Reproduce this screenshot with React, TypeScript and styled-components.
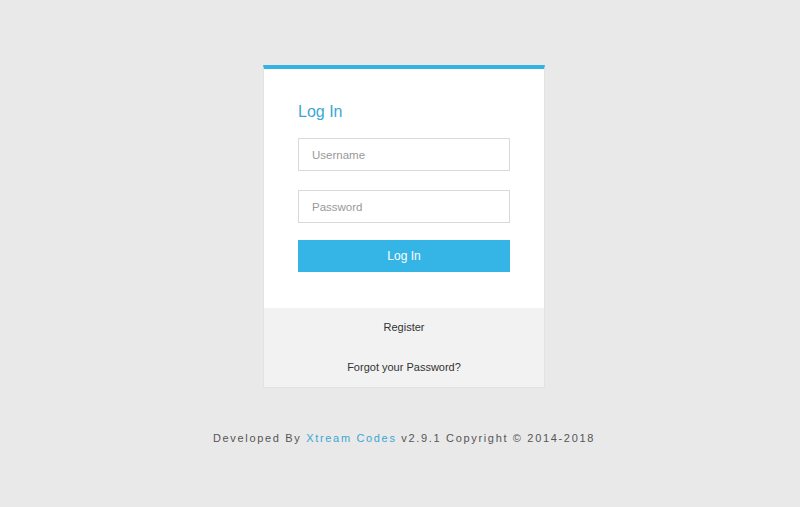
import React from "react";
import styled, { createGlobalStyle } from "styled-components";

const Global = createGlobalStyle`
  html, body { margin: 0; padding: 0; background: #e9e9e9; }
  body { font-family: "Liberation Sans", Arial, sans-serif; }
`;

const Page = styled.div`
  width: 800px;
  height: 507px;
  display: flex;
  flex-direction: column;
  align-items: center;
  padding: 65px 0 0 8px;
  box-sizing: border-box;
`;

const Card = styled.div`
  width: 282px;
  background: #fff;
  border-top: 4px solid #35b3e3;
  border-left: 1px solid #e2e2e2;
  border-right: 1px solid #e2e2e2;
  border-bottom: 1px solid #e2e2e2;
  box-sizing: border-box;
`;

const Body = styled.div`
  padding: 33px 34px 36px 34px;
  display: flex;
  flex-direction: column;
`;

const Title = styled.h3`
  margin: 0 0 16px 0;
  font-weight: normal;
  font-size: 16px;
  color: #3aa7d2;
  line-height: 20px;
`;

const Input = styled.input<{ $gap: number }>`
  height: 33px;
  box-sizing: border-box;
  border: 1px solid #d9d9d9;
  padding: 0 13px;
  font-family: "Liberation Sans", Arial, sans-serif;
  font-size: 11.5px;
  color: #333;
  margin: 0 0 ${(p) => p.$gap}px 0;
  outline: none;
  &::placeholder { color: #999; }
`;

const Button = styled.button`
  height: 32px;
  border: none;
  background: #35b5e5;
  color: #fff;
  font-family: "Liberation Sans", Arial, sans-serif;
  font-size: 12px;
`;

const Links = styled.div`
  background: #f2f2f2;
  display: flex;
  flex-direction: column;
  align-items: center;
  padding: 12px 0 12px;
  gap: 25px;
`;

const LinkText = styled.a`
  font-size: 11px;
  color: #333;
  line-height: 15px;
  text-decoration: none;
`;

const Footer = styled.div`
  margin-top: 44px;
  font-size: 11px;
  letter-spacing: 1.67px;
  color: #555;
`;

const Brand = styled.span`
  color: #3aa7d2;
`;

export default function App() {
  return (
    <>
      <Global />
      <Page>
        <Card>
          <Body>
            <Title>Log In</Title>
            <Input $gap={19} placeholder="Username" />
            <Input $gap={17} placeholder="Password" type="password" />
            <Button>Log In</Button>
          </Body>
          <Links>
            <LinkText>Register</LinkText>
            <LinkText>Forgot your Password?</LinkText>
          </Links>
        </Card>
        <Footer>
          Developed By <Brand>Xtream Codes</Brand> v2.9.1 Copyright © 2014-2018
        </Footer>
      </Page>
    </>
  );
}
